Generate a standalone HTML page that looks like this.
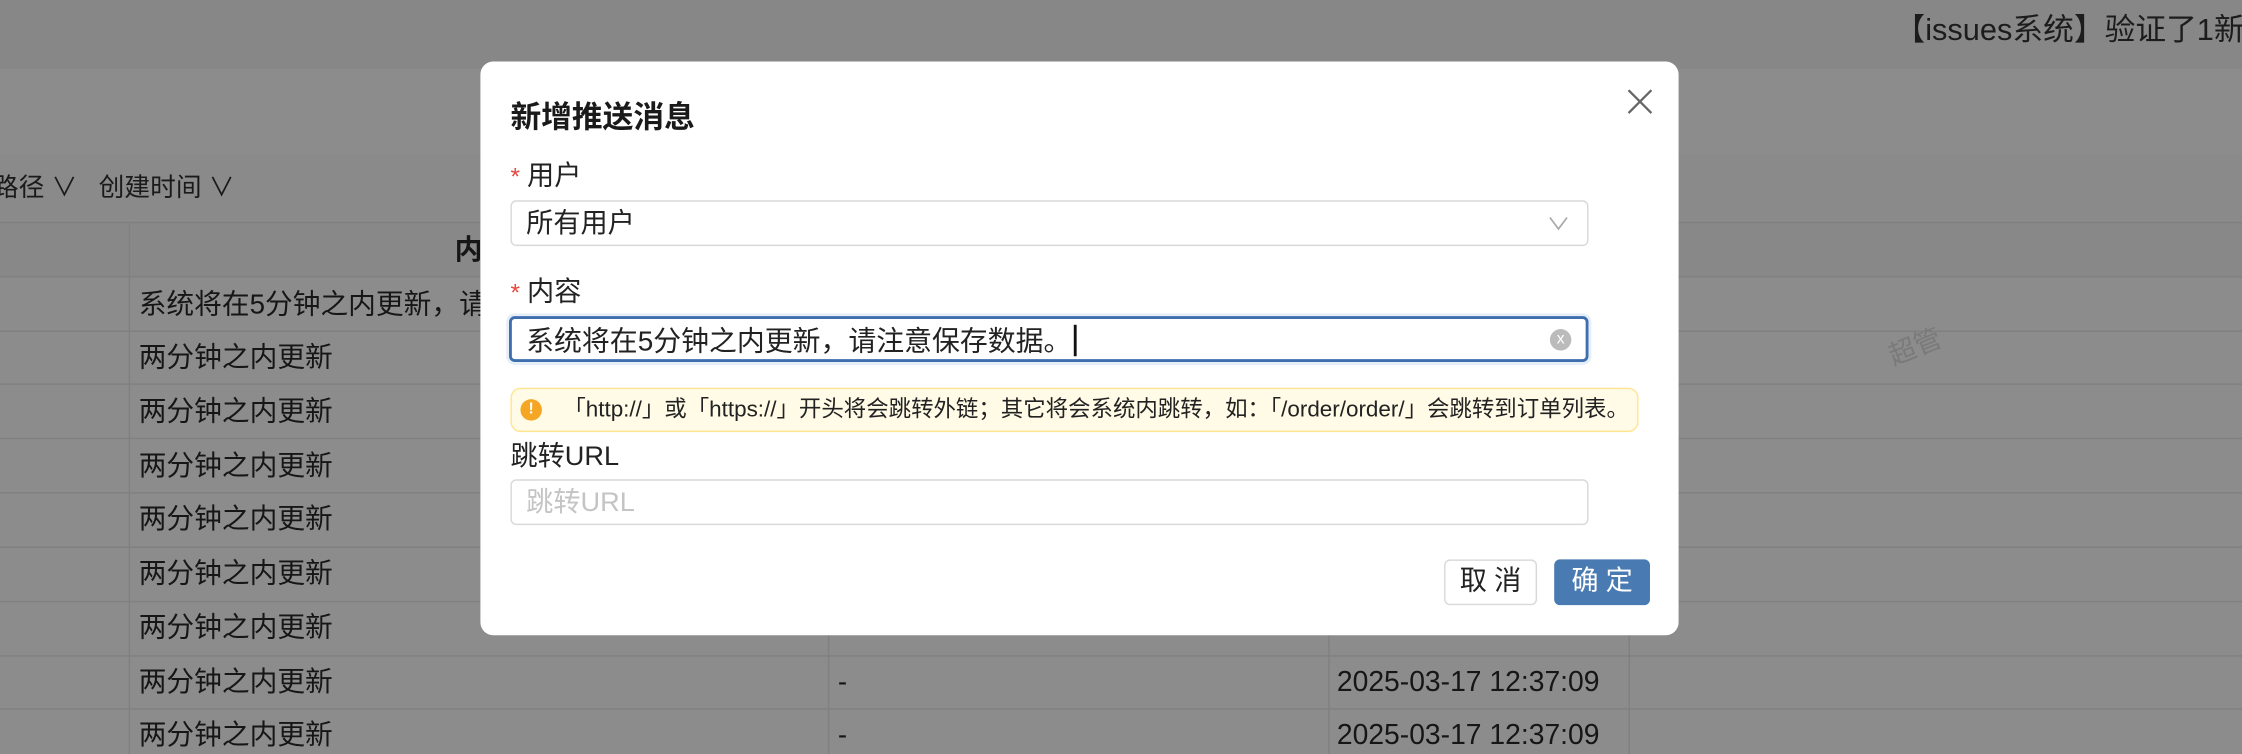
<!DOCTYPE html>
<html><head><meta charset="utf-8"><style>
html,body{margin:0;padding:0;width:2242px;height:754px;overflow:hidden;background:#8c8c8c}
#w{position:absolute;left:0;top:0;width:1568px;height:527px;transform:scale(1.4298,1.4307);transform-origin:0 0;font-family:"Liberation Sans","Noto Sans CJK SC",sans-serif;color:#1a1a1a}
.a{position:absolute;white-space:nowrap}
.hl{position:absolute;left:0;width:1568px;height:1px;background:#808080}
.vl{position:absolute;width:1px;background:#808080}
.cell{position:absolute;font-size:19.4px;line-height:20px;color:#161616;white-space:nowrap}
#m{position:absolute;left:336px;top:43px;width:838px;height:401px;background:#fff;border-radius:9px}
.inp{position:absolute;left:21px;width:752px;height:30px;border:1px solid #d9d9d9;border-radius:4px;background:#fff;box-sizing:content-box}
.lbl{position:absolute;left:21px;font-size:19px;line-height:20px;color:#222;white-space:nowrap}
.req{color:#e5473f;margin-right:5px;font-size:17px}
</style></head><body><div id="w">
<div class="a" style="left:0;top:0;width:1568px;height:48px;background:#878787"></div>
<div class="a" style="left:1325px;top:10px;font-size:21.5px;line-height:22px;color:#1c1c1c">【issues系统】验证了1新</div>
<div class="a" style="left:0;top:108px;width:1568px;height:46px;background:#8a8a8a"></div>
<div class="a" style="left:-5px;top:121px;font-size:18px;line-height:20px">路径 ∨ &nbsp;&nbsp;创建时间 ∨</div>
<div class="a" style="left:0;top:155px;width:1568px;height:38px;background:#888"></div>
<div class="hl" style="top:155px"></div>
<div class="hl" style="top:193px"></div><div class="hl" style="top:231px"></div><div class="hl" style="top:268px"></div><div class="hl" style="top:306px"></div><div class="hl" style="top:344px"></div><div class="hl" style="top:382px"></div><div class="hl" style="top:420px"></div><div class="hl" style="top:458px"></div><div class="hl" style="top:495px"></div>
<div class="vl" style="left:90px;top:155px;height:372px"></div><div class="vl" style="left:579px;top:155px;height:372px"></div><div class="vl" style="left:929px;top:155px;height:372px"></div><div class="vl" style="left:1139px;top:155px;height:372px"></div>
<div class="cell" style="left:318px;top:165px;font-weight:bold">内</div>
<div class="cell" style="left:97px;top:203px">系统将在5分钟之内更新，请</div>
<div class="cell" style="left:97px;top:240px">两分钟之内更新</div>
<div class="cell" style="left:97px;top:278px">两分钟之内更新</div>
<div class="cell" style="left:97px;top:316px">两分钟之内更新</div>
<div class="cell" style="left:97px;top:353px">两分钟之内更新</div>
<div class="cell" style="left:97px;top:391px">两分钟之内更新</div>
<div class="cell" style="left:97px;top:429px">两分钟之内更新</div>
<div class="cell" style="left:97px;top:467px">两分钟之内更新</div>
<div class="cell" style="left:97px;top:504px">两分钟之内更新</div>
<div class="cell" style="left:586px;top:467px">-</div><div class="cell" style="left:586px;top:504px">-</div>
<div class="cell" style="left:935px;top:467px;font-size:19.8px">2025-03-17 12:37:09</div><div class="cell" style="left:935px;top:504px;font-size:19.8px">2025-03-17 12:37:09</div>
<div class="a" style="left:1320px;top:228px;font-size:19px;color:#7a7a7a;transform:rotate(-22deg)">超管</div>
<div id="m">
<div class="a" style="left:21px;top:28px;font-size:21.5px;line-height:22px;font-weight:bold;color:#1a1a1a">新增推送消息</div>
<svg class="a" style="left:802px;top:19px" width="18" height="18" viewBox="0 0 18 18"><path d="M1 1L17 17M17 1L1 17" stroke="#666" stroke-width="1.6"/></svg>
<div class="lbl" style="top:71px"><span class="req">*</span>用户</div>
<div class="inp" style="top:97px"><div class="a" style="left:10px;top:6px;font-size:19px;line-height:20px;color:#222">所有用户</div>
<svg class="a" style="left:725px;top:10px" width="14" height="10" viewBox="0 0 14 10"><path d="M1 1L7 9L13 1" fill="none" stroke="#aaa" stroke-width="1.2"/></svg></div>
<div class="lbl" style="top:152px"><span class="req">*</span>内容</div>
<div class="inp" style="top:178px;border:2px solid #3f6eae;left:20px;box-shadow:0 0 0 2px #e6eef8;width:751px;height:28px"><div class="a" style="left:10px;top:4px;font-size:19.5px;line-height:20px;color:#222">系统将在5分钟之内更新，请注意保存数据。<span style="display:inline-block;width:1.5px;height:22px;background:#111;vertical-align:-4px;margin-left:2px"></span></div>
<div class="a" style="left:726px;top:7px;width:15px;height:15px;border-radius:50%;background:#bbb;color:#fff;font-size:11px;line-height:14px;text-align:center">x</div></div>
<div class="a" style="left:21px;top:228px;width:787px;height:29px;background:#fffbe6;border:1px solid #ffe58f;border-radius:7px">
<div class="a" style="left:6px;top:7px;width:15px;height:15px;border-radius:50%;background:#f5a623;color:#fff;font-size:11px;line-height:15px;text-align:center;font-weight:bold">!</div>
<div class="a" style="left:36px;top:7px;font-size:15.7px;line-height:16px;color:#222">「http://」或「https://」开头将会跳转外链；其它将会系统内跳转，如：「/order/order/」会跳转到订单列表。</div></div>
<div class="lbl" style="top:267px">跳转URL</div>
<div class="inp" style="top:292px"><div class="a" style="left:10px;top:6px;font-size:19px;line-height:20px;color:#c4c4c4">跳转URL</div></div>
<div class="a" style="left:674px;top:348px;width:63px;height:30px;border:1px solid #d9d9d9;border-radius:4px;font-size:19px;line-height:30px;text-align:center;color:#222;letter-spacing:5px;text-indent:5px">取消</div>
<div class="a" style="left:751px;top:348px;width:67px;height:32px;background:#4a7ab2;border-radius:4px;font-size:19px;line-height:32px;text-align:center;color:#fff;letter-spacing:5px;text-indent:5px">确定</div>
</div>
</div></body></html>
